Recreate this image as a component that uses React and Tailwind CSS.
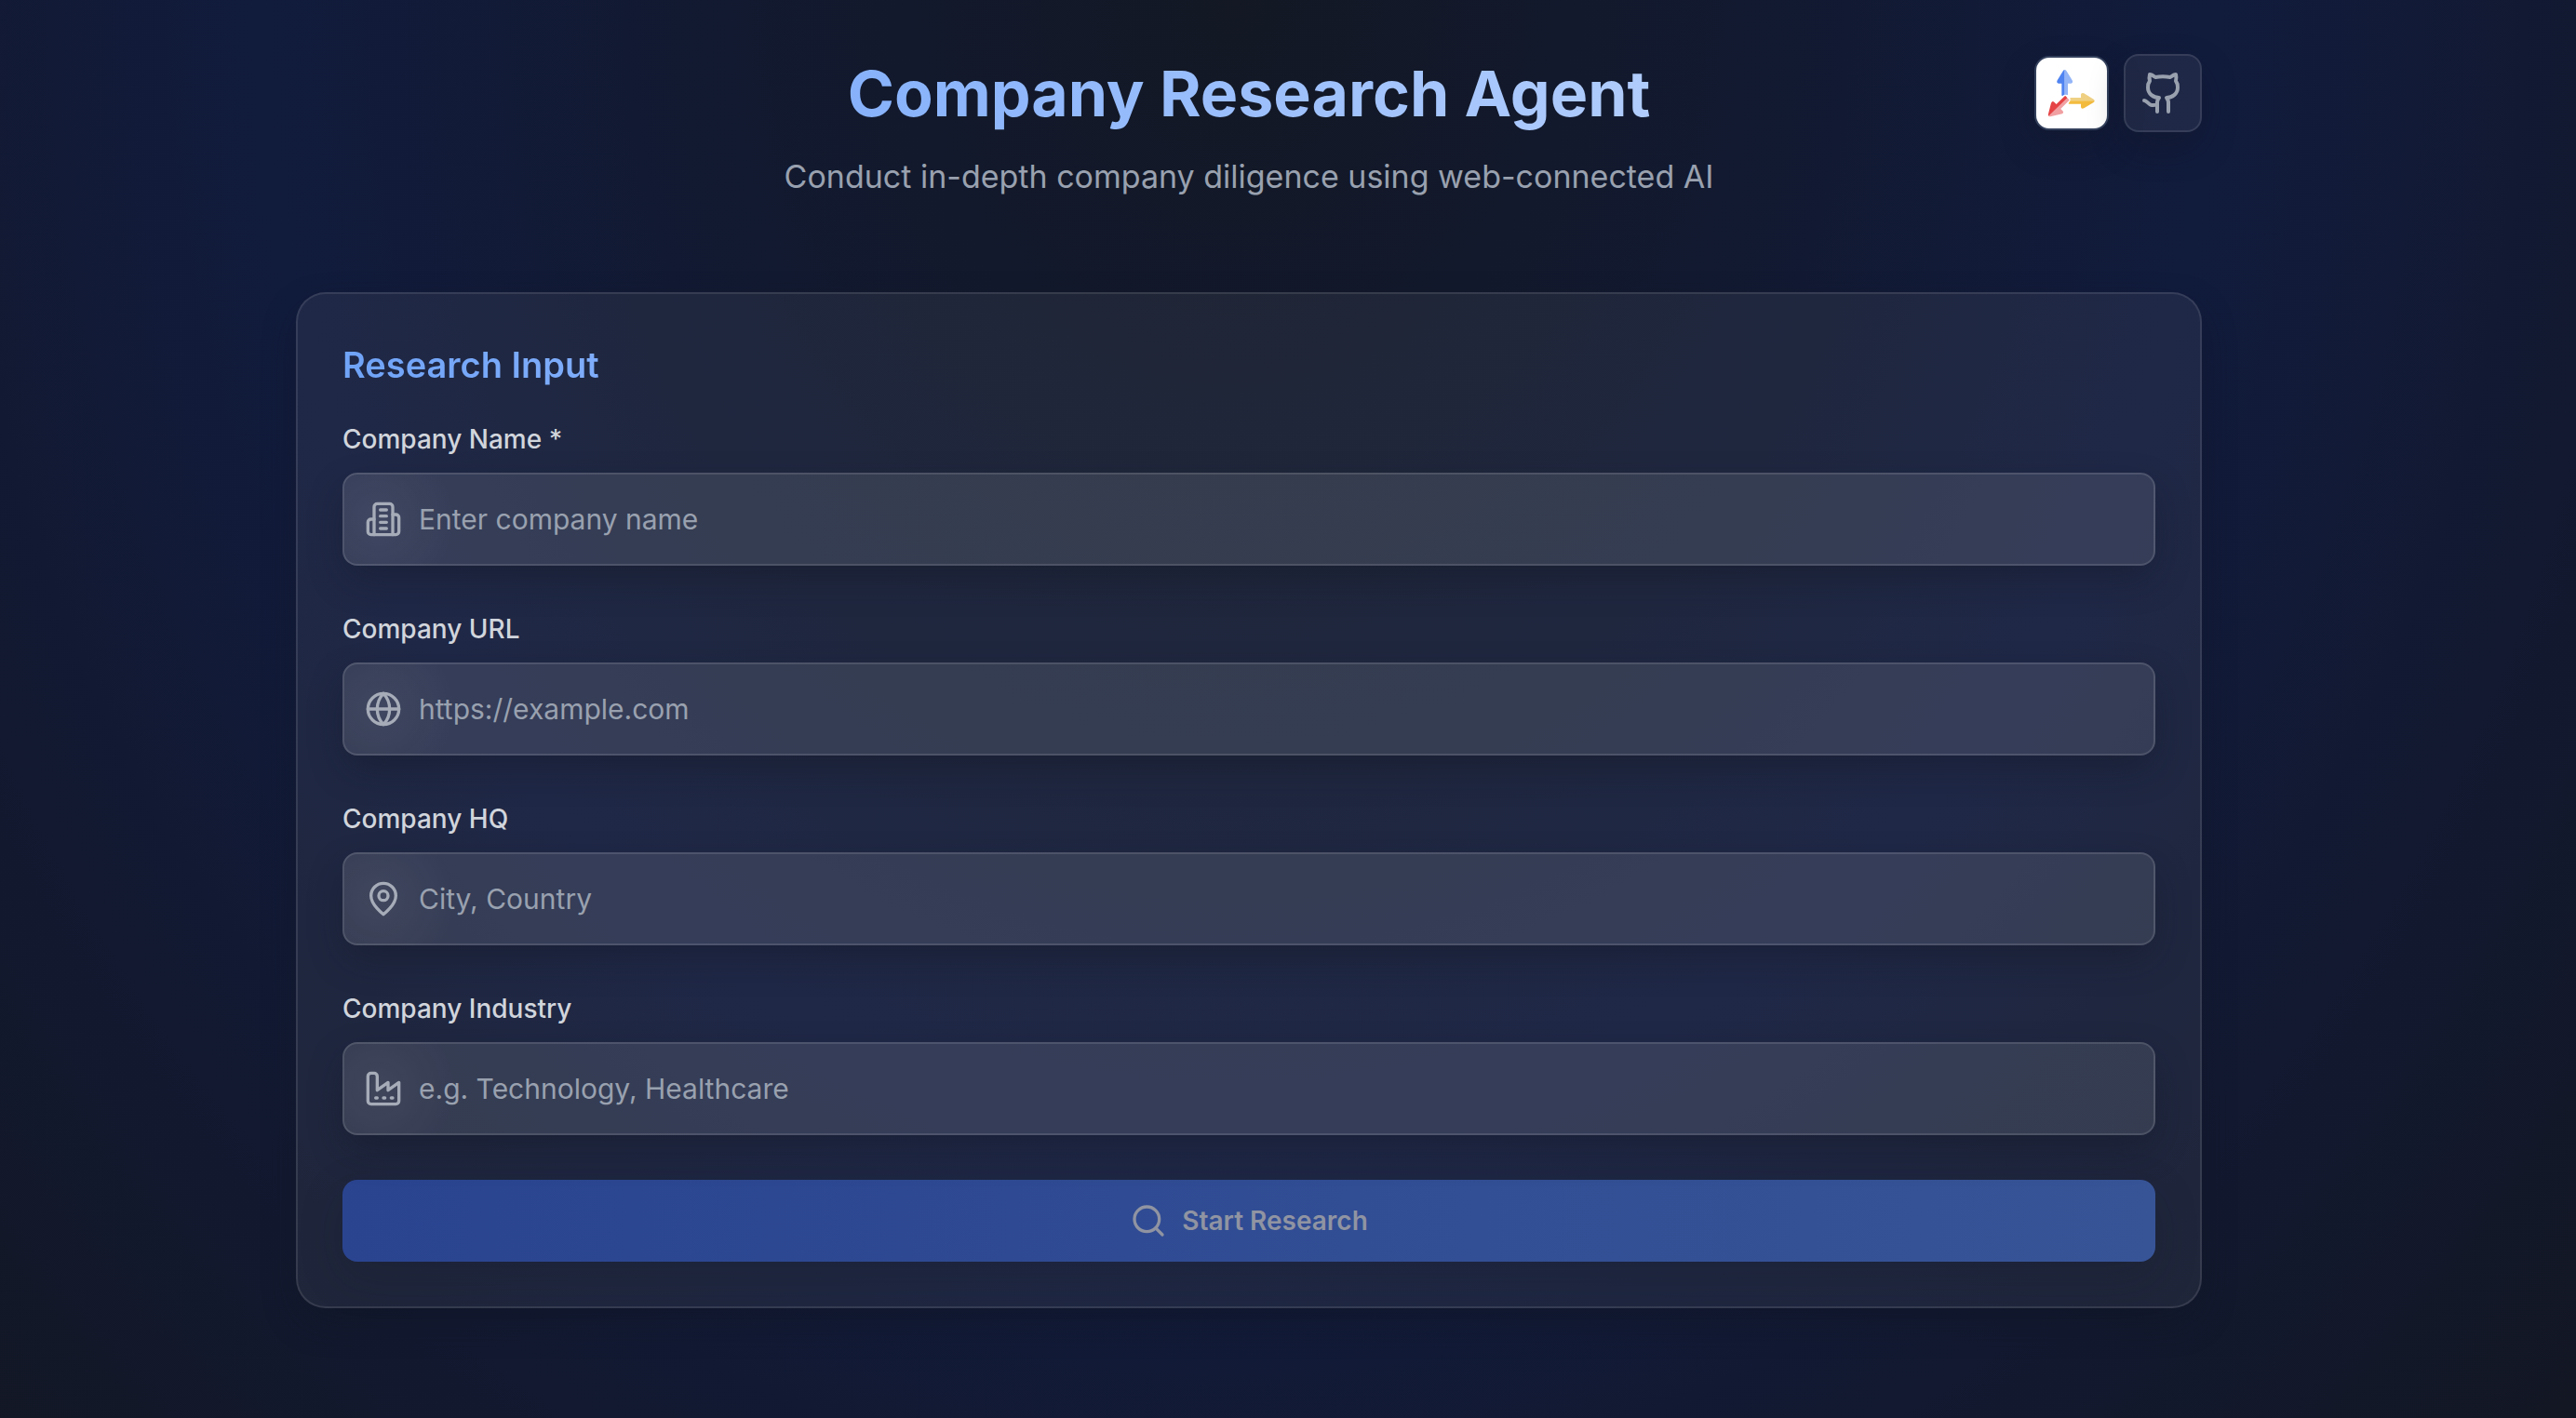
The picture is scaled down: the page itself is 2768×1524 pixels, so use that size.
const glass = "border-2 border-white/10 bg-white/6";
const lift = "shadow-[0_16px_40px_-6px_rgba(18,22,36,0.45)]";

function Icon({ children, className = "size-10" }) {
  return (
    <svg viewBox="0 0 24 24" fill="none" stroke="currentColor" strokeWidth={2} strokeLinecap="round" strokeLinejoin="round" className={className} aria-hidden="true">
      {children}
    </svg>
  );
}

const fields = [
  {
    id: "company-name",
    label: "Company Name *",
    placeholder: "Enter company name",
    icon: (
      <>
        <path d="M6 22V4a2 2 0 0 1 2-2h8a2 2 0 0 1 2 2v18Z" />
        <path d="M6 12H4a2 2 0 0 0-2 2v6a2 2 0 0 0 2 2h2" />
        <path d="M18 9h2a2 2 0 0 1 2 2v9a2 2 0 0 1-2 2h-2" />
        <path d="M10 6h4M10 10h4M10 14h4M10 18h4" />
      </>
    ),
  },
  {
    id: "company-url",
    label: "Company URL",
    placeholder: "https://example.com",
    icon: (
      <>
        <circle cx="12" cy="12" r="10" />
        <path d="M12 2a14.5 14.5 0 0 0 0 20 14.5 14.5 0 0 0 0-20" />
        <path d="M2 12h20" />
      </>
    ),
  },
  {
    id: "company-hq",
    label: "Company HQ",
    placeholder: "City, Country",
    icon: (
      <>
        <path d="M20 10c0 6-8 12-8 12s-8-6-8-12a8 8 0 0 1 16 0Z" />
        <circle cx="12" cy="10" r="3" />
      </>
    ),
  },
  {
    id: "company-industry",
    label: "Company Industry",
    placeholder: "e.g. Technology, Healthcare",
    icon: (
      <>
        <path d="M2 20a2 2 0 0 0 2 2h16a2 2 0 0 0 2-2V8l-7 5V8l-7 5V4a2 2 0 0 0-2-2H4a2 2 0 0 0-2 2Z" />
        <path d="M17 18h1M12 18h1M7 18h1" />
      </>
    ),
  },
];

function Field({ id, label, placeholder, icon }) {
  return (
    <div className="flex flex-col gap-4">
      <label htmlFor={id} className="text-[28px] leading-10 font-medium text-gray-300">
        {label}
      </label>
      <div className="relative">
        <input
          id={id}
          type="text"
          placeholder={placeholder}
          className={`block h-[100px] w-full rounded-2xl border-2 border-white/12 bg-[radial-gradient(circle_at_36px_50%,rgba(255,255,255,0.05),transparent_84px)] bg-white/10 pr-6 pl-20 text-[30px] text-white outline-none placeholder:text-gray-400 ${lift}`}
        />
        <span className="pointer-events-none absolute inset-y-0 left-6 flex items-center text-[#a6acb8]">
          <Icon>{icon}</Icon>
        </span>
      </div>
    </div>
  );
}

function Arrow({ left, right, transform }) {
  return (
    <g transform={transform}>
      <path d="M0 0q-3 0-5 3l-19 31q-4 9 4 10h10v38q0 2 2 2h8z" fill={left} />
      <path d="M0 0q3 0 5 3l19 31q4 9-4 10h-10v38q0 2-2 2h-8z" fill={right} />
    </g>
  );
}

function TavilyLogo() {
  return (
    <svg viewBox="0 0 228 228" className="size-full" aria-hidden="true">
      <Arrow transform="translate(92 39)" left="#4f83f1" right="#93b5f7" />
      <Arrow transform="translate(188 139) rotate(90)" left="#efd083" right="#f3bb3e" />
      <circle cx="95" cy="134" r="15" fill="white" />
      <Arrow transform="translate(40 188) rotate(-134)" left="#f1a0a2" right="#e54345" />
    </svg>
  );
}

export default function App() {
  return (
    <div className="min-h-screen bg-[radial-gradient(ellipse_76%_160%_at_48%_0%,#131824_0%,#111b3c_50%,#131724_92%)] pr-[84px] pb-20 font-['Inter',sans-serif]">
      <main className="mx-auto flex max-w-[2048px] flex-col gap-24 pt-[58px]">
        <header className="relative text-center">
          <h1 className="mx-auto w-fit bg-linear-to-r from-[#87b2fb] to-[#b0ccfc] bg-clip-text text-[68px] leading-[84px] font-bold text-transparent">
            Company Research Agent
          </h1>
          <p className="mt-5 text-[34px] leading-14 text-gray-400">Conduct in-depth company diligence using web-connected AI</p>
          <nav className="absolute top-0 right-0 flex items-center gap-4">
            <a href="#tavily" aria-label="Tavily" className={`size-20 overflow-hidden rounded-2xl border-2 border-[#33405c] bg-white ${lift}`}>
              <TavilyLogo />
            </a>
            <a href="#github" aria-label="GitHub" className={`rounded-2xl p-4 text-gray-400 ${lift} ${glass}`}>
              <Icon className="size-12">
                <path d="M15 22v-4a4.8 4.8 0 0 0-1-3.5c3 0 6-2 6-5.5.08-1.25-.27-2.48-1-3.5.28-1.15.28-2.35 0-3.5 0 0-1 0-3 1.5-2.64-.5-5.36-.5-8 0C6 2 5 2 5 2c-.3 1.15-.3 2.35 0 3.5A5.403 5.403 0 0 0 4 9c0 3.5 3 5.5 6 5.5-.39.49-.68 1.05-.85 1.65-.17.6-.22 1.23-.15 1.85v4" />
                <path d="M9 18c-4.51 2-5-2-7-2" />
              </Icon>
            </a>
          </nav>
        </header>

        <section className={`rounded-[32px] p-12 ${lift} ${glass}`}>
          <h2 className="mb-8 w-fit bg-linear-to-r from-[#6fa3f7] to-[#7fadfb] bg-clip-text text-[38px] leading-14 font-semibold text-transparent">
            Research Input
          </h2>
          <form className="flex flex-col gap-12">
            {fields.map((field) => (
              <Field key={field.id} {...field} />
            ))}
            <button type="submit" disabled className="flex h-[88px] w-full items-center justify-center gap-4 rounded-2xl bg-linear-to-r from-[#2a4490] to-[#375497] text-[28px] font-semibold text-[#9094a2] shadow-[0_16px_48px_rgba(18,24,36,0.2)]">
              <Icon>
                <circle cx="11" cy="11" r="8" />
                <path d="m21 21-4.3-4.3" />
              </Icon>
              Start Research
            </button>
          </form>
        </section>
      </main>
    </div>
  );
}
